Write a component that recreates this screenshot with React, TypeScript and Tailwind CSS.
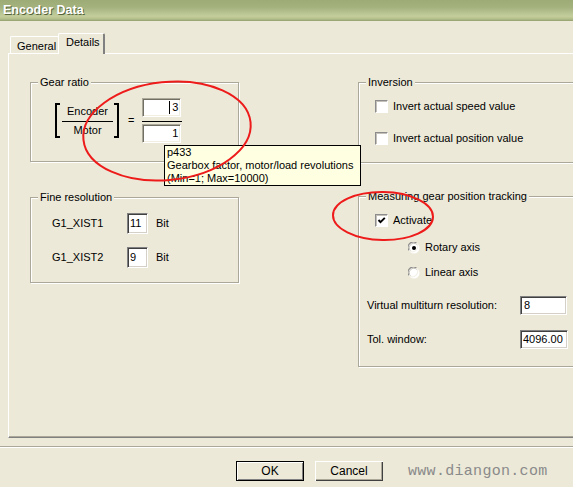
import React from "react";

const face = "bg-[#ece9d8]";

function Group({
  label,
  className = "",
  children,
}: {
  label: string;
  className?: string;
  children?: React.ReactNode;
}) {
  return (
    <div
      className={`box-border border border-[#aca899] shadow-[inset_1px_1px_0_#ffffff,1px_1px_0_#ffffff] ${className}`}
    >
      <div className={`-mt-[7px] ml-[7px] px-[2px] w-fit h-[13px] leading-[13px] ${face}`}>
        {label}
      </div>
      {children}
    </div>
  );
}

function Field({
  className = "",
  children,
  light = false,
  right = false,
}: {
  className?: string;
  children?: React.ReactNode;
  light?: boolean;
  right?: boolean;
}) {
  const edge = light
    ? "border-t-[#aca899] border-l-[#aca899] shadow-[inset_1px_1px_0_#716f64,inset_-1px_-1px_0_#f1efe2]"
    : "border-t-[#808080] border-l-[#808080] shadow-[inset_1px_1px_0_#404040,inset_-1px_-1px_0_#d4d0c8]";
  return (
    <div
      className={`box-border shrink-0 flex items-center bg-white border border-r-white border-b-white leading-[13px] ${edge} ${
        right ? "justify-end pr-[2px]" : "pl-[2px]"
      } ${className}`}
    >
      {children}
    </div>
  );
}

function Check({ checked = false }: { checked?: boolean }) {
  return (
    <div className="box-border shrink-0 w-[13px] h-[13px] bg-white border border-t-[#8c8c8c] border-l-[#8c8c8c] border-r-white border-b-white shadow-[inset_1px_1px_0_#c4c2b8] flex items-center justify-center">
      {checked && (
        <svg width="9" height="9" viewBox="0 0 9 9">
          <polyline points="1.5,4 3.5,6.2 7.8,1.8" fill="none" stroke="#000" strokeWidth="1.9" />
        </svg>
      )}
    </div>
  );
}

function Radio({ checked = false }: { checked?: boolean }) {
  return (
    <svg className="shrink-0" width="12" height="12" viewBox="0 0 12 12">
      <circle cx="6" cy="6" r="5.5" fill="#fff" />
      <path d="M1.2 8.5 A5.2 5.2 0 0 1 8.5 1.2" fill="none" stroke="#8c8c8c" strokeWidth="1.2" />
      <path d="M2.6 9 A4 4 0 0 1 9 2.6" fill="none" stroke="#c4c2b8" strokeWidth="1" />
      <path d="M8.5 1.2 A5.2 5.2 0 0 1 1.2 8.5" fill="none" stroke="#f4f2e8" strokeWidth="1.2" />
      {checked && <circle cx="6" cy="6" r="2" fill="#000" />}
    </svg>
  );
}

export default function App() {
  return (
    <div className="relative w-[573px] h-[487px] overflow-hidden bg-[#ece9d8] text-black text-[11px] font-['Liberation_Sans',Arial,sans-serif]">
      {/* Title bar */}
      <div className="h-[21px] pl-[3px] pt-[1px] leading-[19px] bg-[linear-gradient(to_bottom,#9dab77_0%,#a4b27e_35%,#bac694_65%,#c3cd9b_78%,#b3bf8b_90%,#93a06f_100%)] text-white font-bold text-[12.5px] [text-shadow:1px_1px_0_#56643a]">
        Encoder Data
      </div>

      {/* Tabs */}
      <div className="mt-[12px] h-[20px] pl-[10px] flex items-end">
        <div className="box-border w-[48px] h-[17px] border-l border-t border-white rounded-tl-[2px] pl-[6px] leading-[16px] pt-[1px]">
          General
        </div>
        <div className="relative z-10 box-border w-[47px] h-[21px] -mb-px border-l border-t border-white border-r-2 border-r-[#808080] rounded-t-[2px] bg-[#ece9d8] pl-[7px] pt-[2px] leading-[13px]">
          Details
        </div>
      </div>

      {/* Tab panel */}
      <div className="box-border ml-[8px] w-[570px] h-[385px] border-l border-t border-b border-l-white border-t-white border-b-[#808080] shadow-[inset_0_-1px_0_#aca899] flex pt-[28px]">
        {/* Left column */}
        <div className="shrink-0 ml-[21px] w-[209px] flex flex-col">
          <Group label="Gear ratio" className="h-[80px]">
            <div className="mt-[9px] pl-[24px] flex items-center">
              <div className="box-border w-[5px] h-[35px] border-l-2 border-t-2 border-b-2 border-black" />
              <div className="ml-[2px] mr-[1px] w-[51px] flex flex-col items-center">
                <div className="h-[13px] leading-[13px]">Encoder</div>
                <div className="mt-[3px] w-full h-px bg-black" />
                <div className="mt-[2px] h-[13px] leading-[13px]">Motor</div>
              </div>
              <div className="box-border w-[5px] h-[35px] border-r-2 border-t-2 border-b-2 border-black" />
              <div className="ml-[9px] leading-[13px]">=</div>
              <div className="ml-[8px] flex flex-col">
                <Field light right className="w-[39px] h-[19px]">
                  <span className="w-px h-[13px] bg-black mr-[2px]" />3
                </Field>
                <div className="mt-[4px] w-[40px] h-px bg-black" />
                <Field light right className="mt-[2px] w-[39px] h-[19px]">
                  1
                </Field>
              </div>
            </div>
          </Group>

          <Group label="Fine resolution" className="mt-[35px] h-[86px]">
            <div className="mt-[9px] ml-[21px] h-[21px] flex items-center">
              <div className="w-[75px] leading-[13px]">G1_XIST1</div>
              <Field className="w-[21px] h-[21px]">11</Field>
              <div className="ml-[8px] leading-[13px]">Bit</div>
            </div>
            <div className="mt-[13px] ml-[21px] h-[21px] flex items-center">
              <div className="w-[75px] leading-[13px]">G1_XIST2</div>
              <Field className="w-[21px] h-[21px]">9</Field>
              <div className="ml-[8px] leading-[13px]">Bit</div>
            </div>
          </Group>
        </div>

        {/* Right column */}
        <div className="shrink-0 ml-[119px] w-[240px] flex flex-col">
          <Group label="Inversion" className="h-[81px]">
            <div className="mt-[11px] ml-[16px] h-[13px] flex items-center gap-[5px]">
              <Check />
              <div className="leading-[13px]">Invert actual speed value</div>
            </div>
            <div className="mt-[19px] ml-[16px] h-[13px] flex items-center gap-[5px]">
              <Check />
              <div className="leading-[13px]">Invert actual position value</div>
            </div>
          </Group>

          <Group label="Measuring gear position tracking" className="mt-[33px] h-[171px]">
            <div className="mt-[11px] ml-[16px] h-[13px] flex items-center gap-[5px]">
              <Check checked />
              <div className="leading-[13px]">Activate</div>
            </div>
            <div className="mt-[14px] ml-[49px] h-[13px] flex items-center gap-[5px]">
              <Radio checked />
              <div className="leading-[13px]">Rotary axis</div>
            </div>
            <div className="mt-[12px] ml-[49px] h-[13px] flex items-center gap-[5px]">
              <Radio />
              <div className="leading-[13px]">Linear axis</div>
            </div>
            <div className="mt-[17px] ml-[8px] h-[19px] flex items-center">
              <div className="shrink-0 w-[153px] leading-[13px]">Virtual multiturn resolution:</div>
              <Field className="w-[47px] h-[19px] pl-[3px]">8</Field>
            </div>
            <div className="mt-[15px] ml-[8px] h-[19px] flex items-center">
              <div className="shrink-0 w-[153px] leading-[13px]">Tol. window:</div>
              <Field className="w-[48px] h-[19px]">4096.00</Field>
            </div>
          </Group>
        </div>
      </div>

      {/* Separator */}
      <div className="mt-[8px] h-[2px] border-t border-b border-t-[#aca899] border-b-white" />

      {/* Buttons */}
      <div className="mt-[13px] pl-[236px] flex items-center">
        <button className="shrink-0 box-border w-[68px] h-[20px] border border-black bg-[#ece9d8] shadow-[inset_1px_1px_0_#ffffff,inset_-1px_-1px_0_#808080] text-[12px] leading-[13px] font-['Liberation_Sans_Narrow','Liberation_Sans',sans-serif]">
          OK
        </button>
        <button className="shrink-0 ml-[11px] box-border w-[68px] h-[20px] bg-[#ece9d8] shadow-[inset_1px_1px_0_#ffffff,inset_-1px_-1px_0_#404040,inset_-2px_-2px_0_#aca899] text-[12px] leading-[13px] font-['Liberation_Sans_Narrow','Liberation_Sans',sans-serif]">
          Cancel
        </button>
        <div className="shrink-0 ml-[25px] text-[15px] leading-[15px] text-[#8a8a8a] tracking-[0.3px] whitespace-nowrap font-['Liberation_Mono',monospace]">
          www.diangon.com
        </div>
      </div>

      {/* Tooltip */}
      <div className="absolute left-[164px] top-[145px] box-border w-[197px] h-[41px] border border-black bg-[#ffffe1] pl-[2px] leading-[13px] whitespace-nowrap">
        <div>p433</div>
        <div>Gearbox factor, motor/load revolutions</div>
        <div>(Min=1; Max=10000)</div>
      </div>

      {/* Red annotation ellipses */}
      <svg className="absolute left-0 top-0 pointer-events-none" width="573" height="487" viewBox="0 0 573 487">
        <ellipse cx="167" cy="131" rx="84" ry="49" transform="rotate(-6 167 131)" fill="none" stroke="#ee1b1b" strokeWidth="2" />
        <ellipse cx="383" cy="216" rx="50" ry="24" transform="rotate(1 383 216)" fill="none" stroke="#ee1b1b" strokeWidth="2" />
      </svg>
    </div>
  );
}
